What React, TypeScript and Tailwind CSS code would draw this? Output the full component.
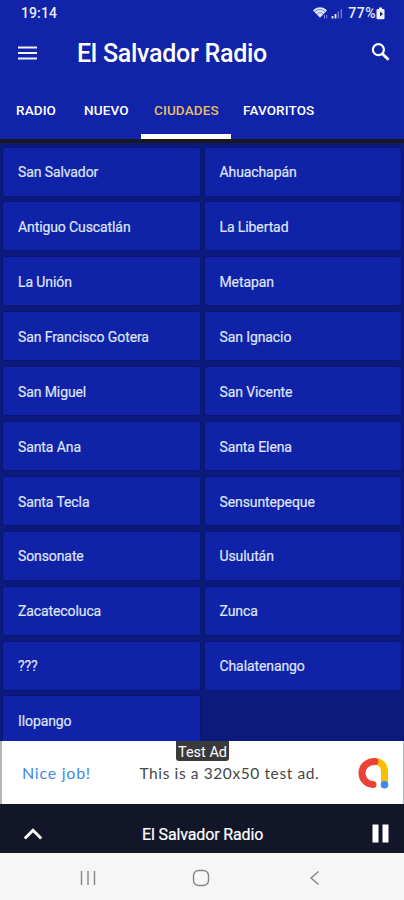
import React from 'react';

const tabs = [
    { label: 'RADIO', box: 'pl-[16px] w-[72px]' },
    { label: 'NUEVO', box: 'pl-[12px] w-[69px]' },
    { label: 'CIUDADES', box: 'pl-[13px] w-[90px]', active: true },
    { label: 'FAVORITOS', box: 'pl-[12px] w-[100px]' },
];

const cities = [
    'San Salvador', 'Ahuachapán',
    'Antiguo Cuscatlán', 'La Libertad',
    'La Unión', 'Metapan',
    'San Francisco Gotera', 'San Ignacio',
    'San Miguel', 'San Vicente',
    'Santa Ana', 'Santa Elena',
    'Santa Tecla', 'Sensuntepeque',
    'Sonsonate', 'Usulután',
    'Zacatecoluca', 'Zunca',
    '???', 'Chalatenango',
    'Ilopango',
];

const StatusIcons: React.FC = () => (
    <svg className="w-[32px] h-[14px]" viewBox="0 0 32 14" fill="none">
        {/* Wifi */}
        <path d="M0 4.5C4 0.2 10 0.2 14 4.5L7 11.8Z" fill="#dfe4fa" />
        <path d="M1.8 5.6C5 3 9 3 12.2 5.6M4 7.9C6 6.2 8 6.2 10 7.9" stroke="#1426a8" strokeWidth="0.5" />
        <path d="M11.5 9v3.5M13.7 9v3.5" stroke="#7f8bd6" strokeWidth="1" />
        {/* Signal bars */}
        <path d="M19.5 10v2.5M22.5 8v4.5" stroke="#e6eafc" strokeWidth="1.8" />
        <path d="M25.3 5.5v7M28.3 3v9.5" stroke="#6d7bd0" strokeWidth="1.4" />
    </svg>
);

const BatteryIcon: React.FC = () => (
    <svg className="w-[9px] h-[13px]" viewBox="0 0 9 13">
        <path d="M3 0.5h3v1.5h1.3q1.2 0 1.2 1.2v7.8q0 1.2-1.2 1.2H1.7Q0.5 12.2 0.5 11V3.2Q0.5 2 1.7 2H3Z" fill="#eef0fc" />
        <path d="M4 4.5v5l3-2.5Z" fill="#1b2570" />
    </svg>
);

const Header: React.FC = () => (
    <header className="h-[143px] bg-[#1023a9] border-b-4 border-[#17181f] text-white flex flex-col shrink-0">
        <div className="h-[26px] pl-[21px] pr-[19px] flex items-center justify-between text-[14px] font-medium text-[#e8ebfb]">
            <span className="tracking-[0.1px]">19:14</span>
            <div className="flex items-center">
                <StatusIcons />
                <span className="ml-[3px] tracking-[0.5px]">77%</span>
                <BatteryIcon />
            </div>
        </div>
        <div className="h-[54px] pl-[18px] pr-[13px] flex items-center">
            <svg className="w-[20px] h-[14px]" viewBox="0 0 20 14">
                <path d="M0 1.5h19M0 7h19M0 12.5h19" stroke="#f2f3fd" strokeWidth="1.9" />
            </svg>
            <h1 className="ml-[39px] pt-[1px] text-[25px] leading-[30px] font-medium tracking-[-0.27px] whitespace-nowrap">El Salvador Radio</h1>
            <svg className="ml-auto mt-[-2px] w-[20px] h-[20px]" viewBox="0 0 20 20" fill="none" stroke="#fff">
                <circle cx="7.4" cy="7.7" r="5.5" strokeWidth="2.2" />
                <path d="M11.4 11.7L17.6 17.8" strokeWidth="2.8" />
            </svg>
        </div>
        <nav className="h-[59px] flex text-[13.5px] font-medium">
            {tabs.map((tab) => (
                <div key={tab.label} className={`${tab.box} h-full flex items-center border-b-5 ${tab.active ? 'border-white text-[#e5bf68]' : 'border-transparent'}`}>
                    <span className="pt-[6px] tracking-[0.13px]">{tab.label}</span>
                </div>
            ))}
        </nav>
    </header>
);

const CityGrid: React.FC = () => (
    <main className="h-[598px] shrink-0 overflow-hidden bg-[#0c1a7c] pt-[4.5px] px-[3px]">
        <div className="grid grid-cols-2 gap-x-[5px] gap-y-[6.9px]">
            {cities.map((city) => (
                <div key={city} className="h-[48px] pl-[15px] pt-[2.5px] flex items-center bg-[#1022a7] rounded-[2px] shadow-[0_0_2px_rgba(5,12,80,0.6)] text-[14px] tracking-[-0.1px] text-[#dfe4fa] whitespace-nowrap [-webkit-text-stroke:0.2px]">
                    {city}
                </div>
            ))}
        </div>
    </main>
);

const AdBanner: React.FC = () => (
    <div className="relative h-[63px] shrink-0 bg-white border-l-2 border-r border-[#b4b6bd] flex items-center">
        <span className="absolute left-[174px] top-0 w-[53px] h-[20px] rounded-b-[3px] bg-[#3a3a3a] text-white text-[14.5px] leading-[23px] text-center whitespace-nowrap">Test Ad</span>
        <span className="ml-[20px] w-[117.5px] pt-[1px] text-[16px] text-[#4285f4] font-['Lato','Open_Sans',sans-serif] tracking-[0.75px]">Nice job!</span>
        <span className="pt-[2px] text-[15.5px] text-[#474747] font-['Lato','Open_Sans',sans-serif] tracking-[0.6px] whitespace-nowrap">This is a 320x50 test ad.</span>
        <svg className="ml-auto mr-[13px] w-[32px] h-[32px]" viewBox="0 0 32 32" fill="none" strokeLinecap="round">
            <path d="M17 4.5C22.5 4.5 26.5 8.5 26.5 14.5V27" stroke="#fbbc04" strokeWidth="7" strokeLinecap="butt" />
            <path d="M17 4.5C9 4.5 4 9.5 4 16C4 22.5 9 27.5 15 27.5" stroke="#ea4335" strokeWidth="7" />
            <circle cx="26.5" cy="27.8" r="3.8" fill="#4285f4" />
        </svg>
    </div>
);

const PlayerBar: React.FC = () => (
    <div className="h-[49px] shrink-0 bg-[#131528] flex items-center pl-[23px] pr-[15px] pt-[12px] text-white">
        <svg className="w-[20px] h-[13px] mt-[-3px]" viewBox="0 0 20 13" fill="none">
            <path d="M1.8 11.5L10 3.3L18.2 11.5" stroke="#fff" strokeWidth="3" />
        </svg>
        <span className="ml-[99px] text-[16px] leading-[20px] tracking-[-0.14px] whitespace-nowrap [-webkit-text-stroke:0.2px]">El Salvador Radio</span>
        <svg className="ml-auto mt-[-2px] w-[17px] h-[19px]" viewBox="0 0 17 19">
            <path d="M0.5 0.5h6v18h-6zM10.5 0.5h6v18h-6z" fill="#fff" />
        </svg>
    </div>
);

const SystemNav: React.FC = () => (
    <footer className="h-[47px] shrink-0 bg-[#f6f6f6] pl-[80px] pr-[84px] pt-[2px] flex items-center justify-between text-[#858585]">
        <svg className="w-[16px] h-[16px]" viewBox="0 0 16 16">
            <path d="M1.5 1v14M8 1v14M14.5 1v14" stroke="currentColor" strokeWidth="1.4" />
        </svg>
        <svg className="w-[18px] h-[18px] mr-[3px]" viewBox="0 0 18 18" fill="none">
            <rect x="1.5" y="1.5" width="15" height="15" rx="5" stroke="currentColor" strokeWidth="1.4" />
        </svg>
        <svg className="w-[11px] h-[16px]" viewBox="0 0 11 16" fill="none">
            <path d="M9.5 1.5L2 8L9.5 14.5" stroke="currentColor" strokeWidth="1.4" />
        </svg>
    </footer>
);

const App: React.FC = () => {
    return (
        <div className="w-[404px] h-[900px] overflow-hidden flex flex-col font-['Roboto',sans-serif]">
            <Header />
            <CityGrid />
            <AdBanner />
            <PlayerBar />
            <SystemNav />
        </div>
    );
};

export default App;
